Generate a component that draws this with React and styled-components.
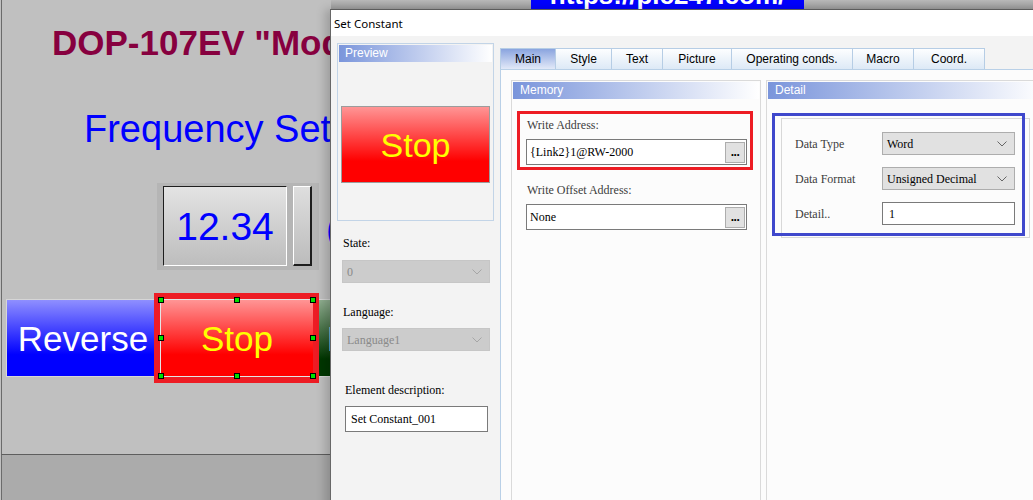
import React from "react";
import styled, { createGlobalStyle, css } from "styled-components";

const GlobalStyle = createGlobalStyle`
  html, body { margin: 0; padding: 0; }
  body {
    width: 1033px;
    height: 500px;
    overflow: hidden;
    background: #c0c0c0;
    font-family: "Liberation Sans", Arial, sans-serif;
  }
  * { box-sizing: border-box; }
`;

const SANS = `"Liberation Sans", Arial, sans-serif`;
const SERIF = `"Liberation Serif", "Times New Roman", serif`;

/* ---------- HMI screen (free canvas) ---------- */

const Screen = styled.div`
  position: relative;
  width: 1033px;
  height: 500px;
  overflow: hidden;
  display: flex;
  flex-direction: column;
  background: #c0c0c0;
`;

const Canvas = styled.div`
  position: relative;
  flex: none;
  height: 455px;
  margin-left: 1px;
  border-left: 1px solid #6b6b6b;
  border-bottom: 1px solid #5e5e5e;
  background: #c0c0c0;
`;

const Footer = styled.div`
  flex: 1;
  margin-left: 1px;
  border-left: 1px solid #6b6b6b;
  background: #ababab;
`;

const placed = css`
  position: absolute;
  left: ${(p) => p.$x}px;
  top: ${(p) => p.$y}px;
`;

const TopStrip = styled.div`
  ${placed};
  width: 710px;
  height: 9px;
  background: linear-gradient(#b9b9b9, #9c9c9c);
`;

const UrlBanner = styled.div`
  position: absolute;
  left: 200px;
  top: 0;
  width: 273px;
  height: 9px;
  overflow: hidden;
  background: #0000ff;
  color: #ffffff;
  font: bold 26px/28px ${SANS};
  text-align: center;
  white-space: nowrap;

  span {
    display: block;
    margin-top: -19px;
  }
`;

const Title = styled.div`
  ${placed};
  font: bold 35px/35px ${SANS};
  color: #87003f;
  white-space: nowrap;
`;

const Caption = styled.div`
  ${placed};
  font: 38px/38px ${SANS};
  color: ${(p) => p.$color || "#0000ff"};
  white-space: nowrap;
`;

const NumericFrame = styled.div`
  ${placed};
  width: 162px;
  height: 87px;
  padding: 3px 7px 0 6px;
  display: flex;
  gap: 6px;
  background: #b5b5b5;
`;

const NumericDisplay = styled.div`
  width: 124px;
  height: 80px;
  display: flex;
  align-items: center;
  justify-content: center;
  border-top: 1px solid #1e1e1e;
  border-left: 1px solid #1e1e1e;
  border-right: 1px solid #ffffff;
  border-bottom: 1px solid #ffffff;
  background: linear-gradient(#e3e3e3, #bdbdbd);
  font: 39px/1 ${SANS};
  color: #0000ff;
`;

const SpinStrip = styled.div`
  width: 19px;
  height: 80px;
  border-top: 1px solid #ffffff;
  border-left: 1px solid #ffffff;
  border-right: 2px solid #1e1e1e;
  border-bottom: 2px solid #1e1e1e;
  background: linear-gradient(#dedede, #bcbcbc);
`;

const ButtonRow = styled.div`
  ${placed};
  display: flex;
`;

const buttonFills = {
  blue: "linear-gradient(#8f8fff 0%, #0000ff 72%)",
  red: "linear-gradient(#ff9595 0%, #ff0000 72%)",
  green: "linear-gradient(#90ae90 0%, #003700 78%)",
};

const HmiButton = styled.div`
  position: relative;
  width: ${(p) => p.$w || 154}px;
  height: ${(p) => p.$h || 78}px;
  flex: none;
  display: flex;
  align-items: center;
  justify-content: center;
  border: 1px solid ${(p) => p.$edge || "#d6d6d6"};
  background: ${(p) => buttonFills[p.$tone]};
  color: ${(p) => p.$ink};
  font: ${(p) => p.$size || 35}px/1 ${SANS};
  white-space: nowrap;
`;

const SelectionFrame = styled.div`
  position: absolute;
  z-index: 2;
  left: -7px;
  top: -7px;
  right: -6px;
  bottom: -7px;
  border: 6px solid #ed1c24;
  pointer-events: none;
`;

const Handle = styled.span`
  position: absolute;
  z-index: 3;
  width: 6px;
  height: 6px;
  left: ${(p) => p.$x}%;
  top: ${(p) => p.$y}%;
  transform: translate(-50%, -50%);
  background: #00e000;
  border: 1px solid #000000;
`;

/* ---------- Dialog window ---------- */

const Dialog = styled.div`
  position: absolute;
  z-index: 5;
  left: 330px;
  top: 9px;
  width: 730px;
  height: 520px;
  display: flex;
  flex-direction: column;
  border-left: 1px solid #676767;
  border-top: 1px solid #5c5c5c;
  box-shadow: -5px 0 9px rgba(0, 0, 0, 0.18);
  background: #f3f3f3;
`;

const TitleBar = styled.div`
  height: 26px;
  flex: none;
  padding-left: 3px;
  display: flex;
  align-items: center;
  background: #ffffff;
  font: 11.5px "Noto Sans", "Open Sans", sans-serif;
  color: #000000;
`;

const DialogBody = styled.div`
  flex: 1;
  display: flex;
  min-height: 0;
`;

const SideColumn = styled.div`
  width: 169px;
  flex: none;
  padding: 7px 0 0 6px;
  display: flex;
  flex-direction: column;
  align-items: flex-start;
`;

const Group = styled.div`
  width: ${(p) => p.$w}px;
  ${(p) => p.$h && `height: ${p.$h}px;`}
  flex: none;
  padding: 1px;
  border: 1px solid ${(p) => (p.$tone === "blue" ? "#c2d4e7" : "#dadada")};
  display: flex;
  flex-direction: column;
`;

const GroupHeader = styled.div`
  height: 17px;
  flex: none;
  padding-left: ${(p) => p.$indent || 6}px;
  background: linear-gradient(to right, #7a95db, #ffffff);
  color: #ffffff;
  font: 12px/17px ${SANS};
`;

const PreviewSlot = styled.div`
  margin: 44px 0 0 2px;
`;

const SideLabel = styled.div`
  margin: ${(p) => p.$top}px 0 0 ${(p) => p.$indent}px;
  font: 12px/14px ${SERIF};
  color: #000000;
`;

const DropDown = styled.div`
  position: relative;
  width: ${(p) => p.$w}px;
  height: 23px;
  flex: none;
  margin: ${(p) => p.$m || "0"};
  padding: 0 22px 0 4px;
  display: flex;
  align-items: center;
  border: 1px solid ${(p) => (p.$disabled ? "#c6c6c6" : "#adadad")};
  background: ${(p) => (p.$disabled ? "#cccccc" : "#e1e1e1")};
  color: ${(p) => (p.$disabled ? "#8a8a8a" : "#000000")};
  font: 12px/1 ${SERIF};
  white-space: nowrap;

  svg {
    position: absolute;
    right: 7px;
    top: 8px;
  }
`;

const TextBox = styled.div`
  width: ${(p) => p.$w}px;
  height: ${(p) => p.$h || 26}px;
  flex: none;
  margin: ${(p) => p.$m || "0"};
  padding: 0 1px 0 ${(p) => p.$pad || 3}px;
  display: flex;
  align-items: center;
  border: 1px solid #7a7a7a;
  background: #ffffff;
  color: #000000;
  font: 12px/1 ${SERIF};
  white-space: nowrap;
`;

const BrowseButton = styled.span`
  margin-left: auto;
  width: 20px;
  height: 21px;
  display: flex;
  align-items: flex-end;
  justify-content: center;
  padding-bottom: 4px;
  border: 1px solid #adadad;
  background: #e1e1e1;
  font: bold 12px/1 ${SANS};
  letter-spacing: -0.5px;
  color: #000000;
`;

/* ---------- Tabs ---------- */

const TabArea = styled.div`
  flex: 1;
  padding-top: 12px;
  display: flex;
  flex-direction: column;
  min-width: 0;
`;

const TabStrip = styled.div`
  display: flex;
  height: 21px;
  flex: none;
`;

const Tab = styled.div`
  width: ${(p) => p.$w}px;
  height: 21px;
  margin-left: -1px;
  display: flex;
  align-items: center;
  justify-content: center;
  border: 1px solid #b6cde5;
  border-bottom: none;
  background: ${(p) =>
    p.$active
      ? "linear-gradient(#8aa4df, #e2e9f8)"
      : "linear-gradient(#fdfeff, #dde9f6)"};
  font: 12px/1 ${SANS};
  color: #000000;

  &:first-child {
    margin-left: 0;
  }
`;

const TabPanel = styled.div`
  flex: 1;
  display: flex;
  gap: 5px;
  padding: 10px 0 0 10px;
  border-top: 1px solid #b9d0e7;
  border-left: 1px solid #b9d0e7;
  background: #fcfcfc;
`;

const AnnotatedField = styled.div`
  width: 236px;
  height: 59px;
  margin: 12px 0 0 4px;
  padding: 4px 0 0 6px;
  border: 3px solid #ed1c24;
`;

const FieldLabel = styled.div`
  margin: ${(p) => p.$m || "0"};
  font: 12px/14px ${SERIF};
  color: #3c3c3c;
`;

const DetailBox = styled.div`
  position: relative;
  width: 249px;
  height: 120px;
  margin: 19px 0 0 13px;
  padding: 13px 0 0 13px;
  border: 1px solid #d8d8d8;
  display: grid;
  grid-template-columns: 87px 133px;
  grid-auto-rows: 23px;
  row-gap: 12px;
  align-items: center;
`;

const HighlightBox = styled.div`
  position: absolute;
  left: -10px;
  top: -6px;
  width: 253px;
  height: 123px;
  border: 3px solid #3f48cc;
  pointer-events: none;
`;

const Chevron = ({ color = "#666666" }) => (
  <svg width="10" height="6" viewBox="0 0 10 6">
    <path d="M0.5 0.5 L5 5 L9.5 0.5" fill="none" stroke={color} strokeWidth="1" />
  </svg>
);

const tabs = [
  { label: "Main", w: 56, active: true },
  { label: "Style", w: 57 },
  { label: "Text", w: 52 },
  { label: "Picture", w: 70 },
  { label: "Operating conds.", w: 122 },
  { label: "Macro", w: 62 },
  { label: "Coord.", w: 72 },
];

const handles = [
  [0, 0], [50, 0], [100, 0],
  [0, 50], [100, 50],
  [0, 100], [50, 100], [100, 100],
];

export default function App() {
  return (
    <>
      <GlobalStyle />
      <Screen>
        <Canvas>
          <TopStrip $x={329} $y={0}>
            <UrlBanner>
              <span>https://plc247.com/</span>
            </UrlBanner>
          </TopStrip>

          <Title $x={50} $y={25}>DOP-107EV "Modbus RTU"</Title>
          <Caption $x={82} $y={110}>Frequency Setting</Caption>

          <NumericFrame $x={155} $y={183}>
            <NumericDisplay>12.34</NumericDisplay>
            <SpinStrip />
          </NumericFrame>
          <Caption $x={324} $y={210}>(Hz)</Caption>

          <ButtonRow $x={4} $y={299}>
            <HmiButton $tone="blue" $ink="#ffffff">Reverse</HmiButton>
            <HmiButton $tone="red" $ink="#ffff00" $edge="#e4e4e4">
              Stop
              <SelectionFrame />
              {handles.map(([x, y]) => (
                <Handle key={`${x}-${y}`} $x={x} $y={y} />
              ))}
            </HmiButton>
            <HmiButton $tone="green" $ink="#e6eef6">Forward</HmiButton>
          </ButtonRow>
        </Canvas>
        <Footer />

        <Dialog>
          <TitleBar>Set Constant</TitleBar>
          <DialogBody>
            <SideColumn>
              <Group $w={157} $h={178} $tone="blue">
                <GroupHeader>Preview</GroupHeader>
                <PreviewSlot>
                  <HmiButton
                    $tone="red"
                    $ink="#ffff00"
                    $w={149}
                    $h={77}
                    $size={34}
                    $edge="#9c9c9c"
                  >
                    Stop
                  </HmiButton>
                </PreviewSlot>
              </Group>

              <SideLabel $top={15} $indent={6}>State:</SideLabel>
              <DropDown $disabled $w={148} $m="10px 0 0 5px">
                0
                <Chevron color="#a6a6a6" />
              </DropDown>

              <SideLabel $top={22} $indent={6}>Language:</SideLabel>
              <DropDown $disabled $w={148} $m="9px 0 0 5px">
                Language1
                <Chevron color="#a6a6a6" />
              </DropDown>

              <SideLabel $top={32} $indent={8}>Element description:</SideLabel>
              <TextBox $w={143} $m="9px 0 0 8px" $pad={5}>
                Set Constant_001
              </TextBox>
            </SideColumn>

            <TabArea>
              <TabStrip>
                {tabs.map((t) => (
                  <Tab key={t.label} $w={t.w} $active={t.active}>
                    {t.label}
                  </Tab>
                ))}
              </TabStrip>
              <TabPanel>
                <Group $w={250}>
                  <GroupHeader $indent={7}>Memory</GroupHeader>
                  <AnnotatedField>
                    <FieldLabel $m="0 0 7px 1px">Write Address:</FieldLabel>
                    <TextBox $w={221}>
                      {"{Link2}1@RW-2000"}
                      <BrowseButton>...</BrowseButton>
                    </TextBox>
                  </AnnotatedField>
                  <FieldLabel $m="13px 0 7px 14px">Write Offset Address:</FieldLabel>
                  <TextBox $w={221} $m="0 0 0 13px">
                    None
                    <BrowseButton>...</BrowseButton>
                  </TextBox>
                </Group>

                <Group $w={280}>
                  <GroupHeader $indent={7}>Detail</GroupHeader>
                  <DetailBox>
                    <FieldLabel>Data Type</FieldLabel>
                    <DropDown $w={133}>
                      Word
                      <Chevron />
                    </DropDown>
                    <FieldLabel>Data Format</FieldLabel>
                    <DropDown $w={133}>
                      Unsigned Decimal
                      <Chevron />
                    </DropDown>
                    <FieldLabel>Detail..</FieldLabel>
                    <TextBox $w={133} $h={23} $pad={6}>
                      1
                    </TextBox>
                    <HighlightBox />
                  </DetailBox>
                </Group>
              </TabPanel>
            </TabArea>
          </DialogBody>
        </Dialog>
      </Screen>
    </>
  );
}
